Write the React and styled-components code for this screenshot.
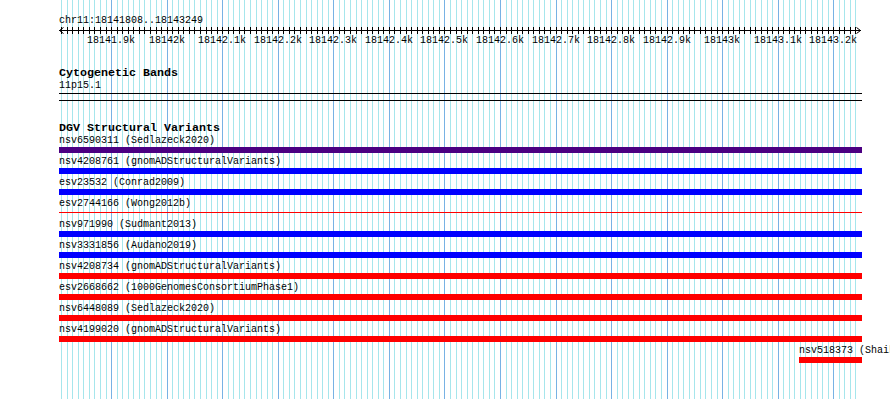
import React from 'react';
import styled, { createGlobalStyle } from 'styled-components';

const START = 18141808;
const END = 18143249;
const SCALE = 0.5555;
const LEFT = 59;
const TRACK_W = 803;
const xOf = (bp) => Math.round(LEFT + 1 + (bp - START) * SCALE);

const minorBps = [];
for (let bp = 18141810; bp <= END; bp += 10) minorBps.push(bp);
const majorBps = minorBps.filter((bp) => bp % 100 === 0);

const fmtK = (bp) => {
  const k = bp / 1000;
  return `${Number.isInteger(k) ? k : k.toFixed(1)}k`;
};

const GlobalStyle = createGlobalStyle`
  html, body {
    margin: 0;
    padding: 0;
    background: #ffffff;
    overflow: hidden;
  }
`;

const Page = styled.div`
  position: relative;
  width: 890px;
  height: 399px;
  overflow: hidden;
  background: #ffffff;
  font-family: "Liberation Mono", "DejaVu Sans Mono", monospace;
  color: #000000;
`;

const GridLayer = styled.svg`
  position: absolute;
  left: 0;
  top: 0;
  z-index: 0;
  display: block;
`;

const Content = styled.div`
  position: relative;
  z-index: 1;
  display: flex;
  flex-direction: column;
  padding: 14px 0 0 ${LEFT}px;
  width: ${TRACK_W}px;
`;

const Section = styled.section`
  display: flex;
  flex-direction: column;
  margin-top: ${(p) => p.$gap || 0}px;
`;

const RulerTitle = styled.div`
  font-size: 10px;
  line-height: 13px;
  height: 13px;
  white-space: nowrap;
`;

const RulerSvg = styled.svg`
  display: block;
  overflow: visible;
`;

const TrackTitle = styled.div`
  font-size: 11.67px;
  font-weight: bold;
  line-height: 13px;
  height: 13px;
  white-space: nowrap;
`;

const Label = styled.div`
  font-size: 10px;
  line-height: 12px;
  height: 12px;
  white-space: nowrap;
`;

const Band = styled.div`
  margin-top: 1px;
  height: 6px;
  border-top: 1px solid #000;
  border-bottom: 1px solid #000;
`;

const FeatureRow = styled.div`
  display: flex;
  flex-direction: column;
  padding-left: ${(p) => p.$offset}px;
  margin-bottom: 3px;
`;

const Bar = styled.div`
  width: ${(p) => p.$width}px;
  height: 6px;
  position: relative;
  background: ${(p) => (p.$thin ? 'transparent' : p.$color)};
  &::after {
    content: '';
    display: ${(p) => (p.$thin ? 'block' : 'none')};
    position: absolute;
    left: 0;
    right: 0;
    top: 2px;
    height: 1px;
    background: ${(p) => p.$color};
  }
`;

const PURPLE = '#4b0082';
const BLUE = '#0000ff';
const RED = '#ff0000';

const features = [
  { id: 'nsv6590311', src: 'Sedlazeck2020', color: PURPLE },
  { id: 'nsv4208761', src: 'gnomADStructuralVariants', color: BLUE },
  { id: 'esv23532', src: 'Conrad2009', color: BLUE },
  { id: 'esv2744166', src: 'Wong2012b', color: RED, thin: true },
  { id: 'nsv971990', src: 'Sudmant2013', color: BLUE },
  { id: 'nsv3331856', src: 'Audano2019', color: BLUE },
  { id: 'nsv4208734', src: 'gnomADStructuralVariants', color: RED },
  { id: 'esv2668662', src: '1000GenomesConsortiumPhase1', color: RED },
  { id: 'nsv6448089', src: 'Sedlazeck2020', color: RED },
  { id: 'nsv4199020', src: 'gnomADStructuralVariants', color: RED },
  { id: 'nsv518373', src: 'Shaikh2009', color: RED, offset: 740, width: 63 },
];

function Grid() {
  return (
    <GridLayer width="890" height="399" shapeRendering="crispEdges">
      {minorBps.map((bp) => (
        <rect
          key={bp}
          x={xOf(bp)}
          y="0"
          width="1"
          height="399"
          fill={bp % 100 === 0 ? '#78b2e4' : '#a6e6ec'}
        />
      ))}
    </GridLayer>
  );
}

function Ruler() {
  return (
    <RulerSvg width={TRACK_W} height="19" shapeRendering="crispEdges">
      <rect x="0" y="3" width={TRACK_W - 1} height="1" fill="#000" />
      {minorBps.map((bp) => (
        <rect key={bp} x={xOf(bp) - LEFT} y="0" width="1" height="7" fill="#000" />
      ))}
      <path d="M0.5 3.5 L4.5 0.5 M0.5 3.5 L4.5 6.5" stroke="#000" strokeWidth="1" fill="none" shapeRendering="auto" />
      <path d="M801.5 3.5 L797.5 0.5 M801.5 3.5 L797.5 6.5" stroke="#000" strokeWidth="1" fill="none" shapeRendering="auto" />
      {majorBps.map((bp) => (
        <text
          key={bp}
          x={xOf(bp) - LEFT}
          y="16"
          textAnchor="middle"
          fontSize="10"
          fontFamily='"Liberation Mono", "DejaVu Sans Mono", monospace'
          fill="#000"
        >
          {fmtK(bp)}
        </text>
      ))}
    </RulerSvg>
  );
}

export default function App() {
  return (
    <Page>
      <GlobalStyle />
      <Grid />
      <Content>
        <Section>
          <RulerTitle>chr11:18141808..18143249</RulerTitle>
          <Ruler />
        </Section>
        <Section $gap={21}>
          <TrackTitle>Cytogenetic Bands</TrackTitle>
          <Label>11p15.1</Label>
          <Band />
        </Section>
        <Section $gap={21}>
          <TrackTitle>DGV Structural Variants</TrackTitle>
          {features.map((f) => (
            <FeatureRow key={f.id} $offset={f.offset || 0}>
              <Label>{`${f.id} (${f.src})`}</Label>
              <Bar $color={f.color} $thin={f.thin} $width={f.width || TRACK_W} />
            </FeatureRow>
          ))}
        </Section>
      </Content>
    </Page>
  );
}
